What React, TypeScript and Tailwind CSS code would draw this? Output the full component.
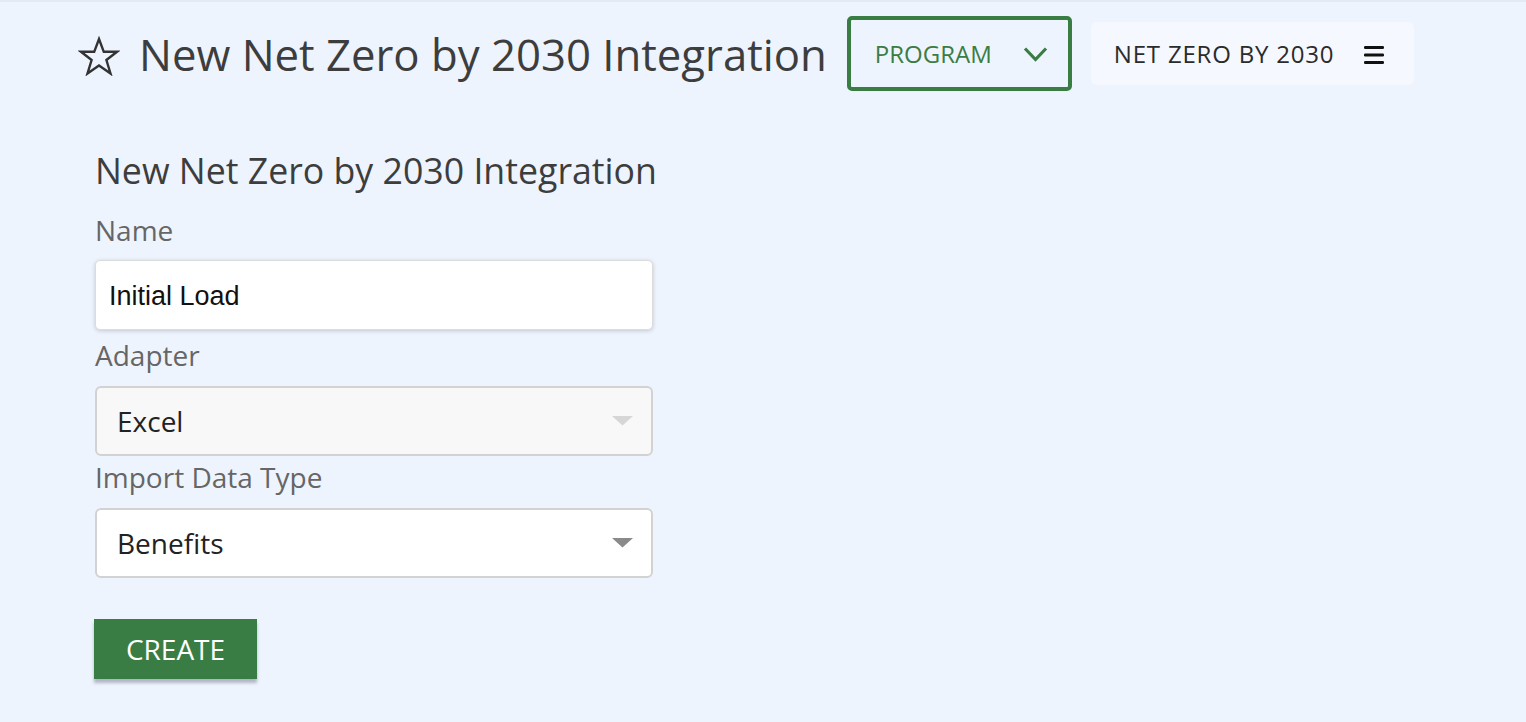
import { useState } from "react";

const StarIcon = () => (
  <svg width="42" height="40" viewBox="0 0 42 40" fill="none" className="mt-[4px]">
    <polygon
      points="21,3 25.8,15.8 39,15.8 28.4,24 32.5,37.5 21,29.4 9.5,37.5 13.6,24 3,15.8 16.2,15.8"
      stroke="#333"
      strokeWidth="2.4"
      strokeLinejoin="miter"
    />
  </svg>
);

const Chevron = () => (
  <svg width="25" height="16" viewBox="0 0 25 16" fill="none">
    <path d="M2 2.5l10.5 11 10.5-11" stroke="#3a7d44" strokeWidth="3.2" />
  </svg>
);

const Burger = () => (
  <svg width="20" height="18" viewBox="0 0 20 18">
    <rect x="0" y="0" width="20" height="3" rx="1.2" fill="#111" />
    <rect x="0" y="7.5" width="20" height="3" rx="1.2" fill="#111" />
    <rect x="0" y="15" width="20" height="3" rx="1.2" fill="#111" />
  </svg>
);

const Caret = ({ color }: { color: string }) => (
  <svg width="21" height="10" viewBox="0 0 21 10">
    <polygon points="0,0 21,0 10.5,9.5" fill={color} />
  </svg>
);

const Field = ({ label, children, top }: { label: string; children: React.ReactNode; top: string }) => (
  <>
    <label className={`${top} block text-[28px] leading-[32px] text-[#666]`}>{label}</label>
    {children}
  </>
);

const App = () => {
  const [name, setName] = useState("Initial Load");

  return (
    <div className="min-h-[722px] w-full bg-[#eef4fe] border-t-2 border-[#e4eaf3] font-['Open_Sans',sans-serif]">
      {/* header */}
      <div className="flex items-center pl-[78px] pt-[14px]">
        <StarIcon />
        <h1 className="ml-[19px] whitespace-nowrap text-[43.7px] leading-[60px] text-[#3d3d3d]">
          New Net Zero by 2030 Integration
        </h1>
        <button className="ml-[20px] flex h-[75px] w-[225px] items-center justify-between rounded-[5px] border-[4px] border-[#3a7d44] pl-[24px] pr-[20px] text-[24px] text-[#3a7d44]">
          <span>PROGRAM</span>
          <Chevron />
        </button>
        <div className="ml-[19px] flex h-[63px] w-[323px] items-center rounded-[6px] bg-[#f5f8fe] pl-[23px] text-[24px] tracking-[0.8px] text-[#2b2b2b]">
          <span>NET ZERO BY 2030</span>
          <span className="ml-[30px] mt-[2px]">
            <Burger />
          </span>
        </div>
      </div>

      {/* form */}
      <div className="ml-[95px] mt-[56px] w-[558px]">
        <h2 className="whitespace-nowrap text-[35.7px] leading-[46px] text-[#3d3d3d]">
          New Net Zero by 2030 Integration
        </h2>

        <Field label="Name" top="mt-[21px]">
          <input
            value={name}
            onChange={(e) => setName(e.target.value)}
            className="mt-[14px] block h-[70px] w-[558px] rounded-[5px] border border-[#dcdcdc] bg-white px-[13px] pt-[2px] text-[27px] text-[#111] shadow-[0_1px_4px_rgba(0,0,0,0.18)] outline-none font-['Liberation_Sans',Arial,sans-serif]"
          />
        </Field>

        <Field label="Adapter" top="mt-[9px]">
          <div className="mt-[15px] flex h-[70px] items-center justify-between rounded-[6px] border-2 border-[#d2d2d2] bg-[#f8f8f8] pl-[20px] pr-[18px] text-[28px] text-[#222]">
            <span>Excel</span>
            <Caret color="#d6d6d6" />
          </div>
        </Field>

        <Field label="Import Data Type" top="mt-[5px]">
          <div className="mt-[15px] flex h-[70px] items-center justify-between rounded-[6px] border-2 border-[#d2d2d2] bg-white pl-[20px] pr-[18px] text-[28px] text-[#222]">
            <span>Benefits</span>
            <Caret color="#8a8a8a" />
          </div>
        </Field>

        <button className="mt-[41px] -ml-px block h-[60px] w-[163px] bg-[#3a7d44] text-[28px] text-white shadow-[0_4px_3px_rgba(60,70,90,0.35)]">
          CREATE
        </button>
      </div>
    </div>
  );
};

export default App;
